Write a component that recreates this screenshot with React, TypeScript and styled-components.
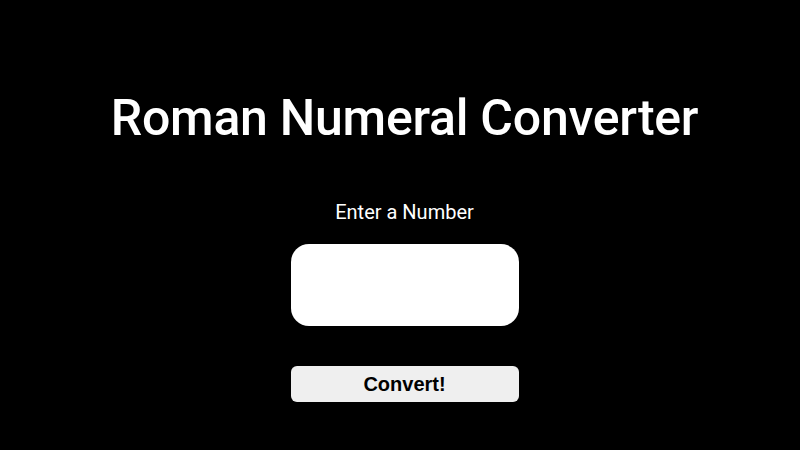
import React, { useState } from 'react';
import styled, { createGlobalStyle } from 'styled-components';

const GlobalStyle = createGlobalStyle`
  html, body {
    margin: 0;
    padding: 0;
    background: #000;
  }
`;

const Page = styled.main`
  box-sizing: border-box;
  display: flex;
  flex-direction: column;
  align-items: center;
  width: 800px;
  height: 450px;
  padding-left: 9px;
  background: #000;
  color: #fff;
  font-family: Roboto, "Noto Sans", sans-serif;
`;

const Title = styled.h1`
  margin: 88px 0 0;
  font-size: 50px;
  font-weight: 500;
  line-height: 60px;
  letter-spacing: -0.25px;
`;

const Form = styled.form`
  display: flex;
  flex-direction: column;
  align-items: center;
  margin-top: 52px;
`;

const Label = styled.label`
  font-size: 20px;
  line-height: 24px;
`;

const NumberInput = styled.input`
  box-sizing: border-box;
  width: 228px;
  height: 82px;
  margin-top: 20px;
  border: none;
  border-radius: 18px;
  background: #fff;
  font-size: 24px;
  text-align: center;
  outline: none;
`;

const ConvertButton = styled.button`
  box-sizing: border-box;
  width: 228px;
  height: 36px;
  margin-top: 40px;
  border: none;
  border-radius: 6px;
  background: #efefef;
  color: #000;
  font-family: "Liberation Sans", Arial, sans-serif;
  font-size: 20px;
  font-weight: 700;
  cursor: pointer;
`;

export default function App() {
  const [value, setValue] = useState('');

  return (
    <>
      <GlobalStyle />
      <Page>
        <Title>Roman Numeral Converter</Title>
        <Form onSubmit={e => e.preventDefault()}>
          <Label htmlFor="number">Enter a Number</Label>
          <NumberInput
            id="number"
            type="number"
            value={value}
            onChange={e => setValue(e.target.value)}
          />
          <ConvertButton type="submit">Convert!</ConvertButton>
        </Form>
      </Page>
    </>
  );
}
